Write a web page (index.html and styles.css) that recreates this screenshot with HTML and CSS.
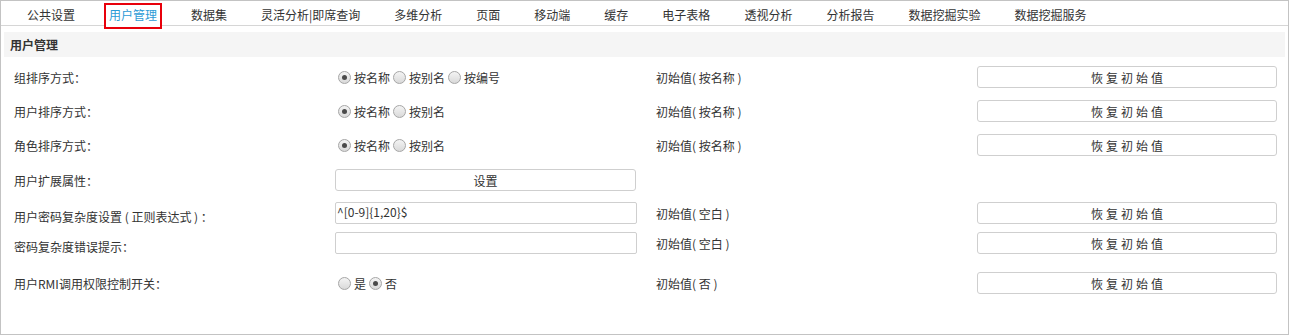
FILE: index.html
```html
<!DOCTYPE html>
<html lang="zh-CN">
<head>
<meta charset="UTF-8">
<title>用户管理</title>
<link rel="stylesheet" href="styles.css">
</head>
<body>
<div class="page">
  <div class="tabs">
    <span class="tab">公共设置</span>
    <span class="tab active">用户管理</span>
    <span class="tab">数据集</span>
    <span class="tab">灵活分析|即席查询</span>
    <span class="tab">多维分析</span>
    <span class="tab">页面</span>
    <span class="tab">移动端</span>
    <span class="tab">缓存</span>
    <span class="tab">电子表格</span>
    <span class="tab">透视分析</span>
    <span class="tab">分析报告</span>
    <span class="tab">数据挖掘实验</span>
    <span class="tab">数据挖掘服务</span>
  </div>

  <div class="section-title">用户管理</div>

  <div class="rows">
    <div class="row h34">
      <div class="label">组排序方式：</div>
      <div class="radios">
        <span class="radio checked"></span><span class="opt">按名称</span>
        <span class="radio"></span><span class="opt">按别名</span>
        <span class="radio"></span><span class="opt">按编号</span>
      </div>
      <div class="init">初始值( 按名称 )</div>
      <button class="btn restore">恢复初始值</button>
    </div>

    <div class="row h34">
      <div class="label">用户排序方式：</div>
      <div class="radios">
        <span class="radio checked"></span><span class="opt">按名称</span>
        <span class="radio"></span><span class="opt">按别名</span>
      </div>
      <div class="init">初始值( 按名称 )</div>
      <button class="btn restore">恢复初始值</button>
    </div>

    <div class="row h34">
      <div class="label">角色排序方式：</div>
      <div class="radios">
        <span class="radio checked"></span><span class="opt">按名称</span>
        <span class="radio"></span><span class="opt">按别名</span>
      </div>
      <div class="init">初始值( 按名称 )</div>
      <button class="btn restore">恢复初始值</button>
    </div>

    <div class="row h36">
      <div class="label">用户扩展属性：</div>
      <button class="btn setting">设置</button>
      <div></div>
      <div></div>
    </div>

    <div class="row h30">
      <div class="label low">用户密码复杂度设置 ( 正则表达式 ) ：</div>
      <input class="field" type="text" value="^[0-9]{1,20}$">
      <div class="init">初始值( 空白 )</div>
      <button class="btn restore">恢复初始值</button>
    </div>

    <div class="row h30">
      <div class="label low">密码复杂度错误提示：</div>
      <input class="field" type="text" value="">
      <div class="init">初始值( 空白 )</div>
      <button class="btn restore">恢复初始值</button>
    </div>

    <div class="row h50">
      <div class="label">用户RMI调用权限控制开关：</div>
      <div class="radios">
        <span class="radio"></span><span class="opt">是</span>
        <span class="radio checked"></span><span class="opt">否</span>
      </div>
      <div class="init">初始值( 否 )</div>
      <button class="btn restore">恢复初始值</button>
    </div>
  </div>
</div>
</body>
</html>
```

FILE: styles.css
```css
body {
  margin: 0;
  font-family: "Noto Sans CJK SC", "Liberation Sans", sans-serif;
  font-size: 12px;
  color: #333;
  background-color: #fff;
}

.page {
  width: 1289px;
  height: 335px;
  box-sizing: border-box;
  border: 1px solid #c3c3c3;
}

/* tab bar */
.tabs {
  display: flex;
  align-items: flex-start;
  height: 25px;
  box-sizing: border-box;
  padding: 2px 0 0 9px;
  border-bottom: 1px solid #d6d6d6;
}

.tab {
  margin: 0 12px;
  padding: 1px 3px 3px;
  border: 2px solid transparent;
  line-height: 18px;
  white-space: nowrap;
}

.tab.active {
  border-color: #e8000b;
  color: #2b9bd6;
  background-color: #fff;
}

.section-title {
  margin: 6px 3px 0;
  padding-left: 6px;
  height: 25px;
  line-height: 25px;
  background-color: #f5f5f5;
  font-weight: bold;
}

/* settings rows */
.rows {
  margin-top: 3px;
  padding-left: 13px;
}

.row {
  display: grid;
  grid-template-columns: 321px 321px 321px 300px;
  align-items: center;
}

.h30 { height: 30px; }
.h34 { height: 34px; }
.h36 { height: 36px; }
.h50 { height: 50px; }

.label {
  white-space: nowrap;
}

.label.low {
  padding-top: 6px;
}

.radios {
  display: flex;
  align-items: center;
  padding-left: 3px;
}

.radio {
  width: 11px;
  height: 11px;
  border: 1px solid #a6a6a6;
  border-radius: 50%;
  background: linear-gradient(#f4f4f4, #d9d9d9);
  position: relative;
}

.radio.checked::after {
  content: "";
  position: absolute;
  left: 3px;
  top: 3px;
  width: 5px;
  height: 5px;
  border-radius: 50%;
  background-color: #4a4a4a;
}

.opt {
  margin: 0 3px;
}

.init {
  white-space: nowrap;
}

.btn {
  height: 22px;
  padding: 0;
  border: 1px solid #cfcfcf;
  border-radius: 3px;
  background-color: #fff;
  font-family: inherit;
  font-size: 12px;
  color: #333;
}

.restore {
  width: 300px;
  letter-spacing: 3px;
  text-indent: 3px;
}

.setting {
  width: 301px;
}

.field {
  width: 302px;
  height: 22px;
  box-sizing: border-box;
  padding: 0 1px 3px;
  border: 1px solid #cfcfcf;
  border-radius: 2px;
  font-family: inherit;
  font-size: 12px;
  color: #333;
  outline: none;
}
```
